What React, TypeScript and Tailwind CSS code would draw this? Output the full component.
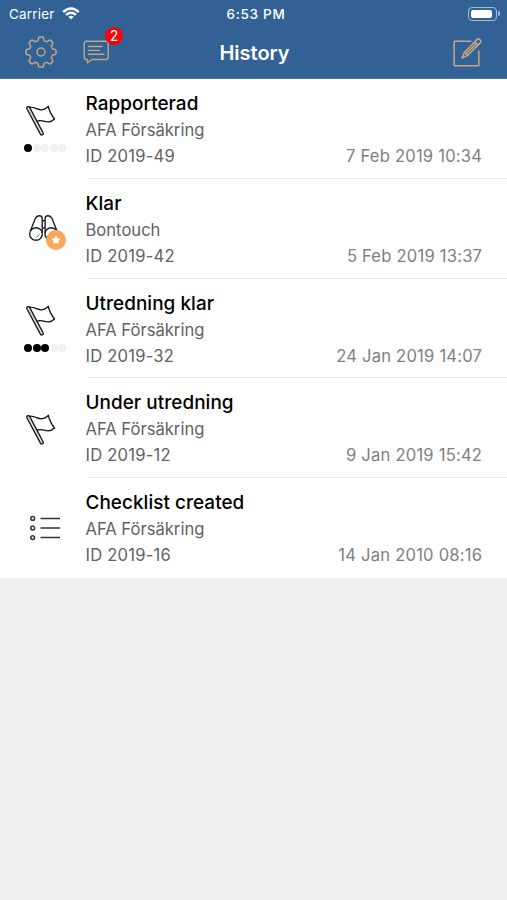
type IconName = 'flag' | 'binoculars' | 'list';

interface HistoryItem {
  id: string;
  title: string;
  company: string;
  date: string;
  icon: IconName;
  progress?: number;
}

const items: HistoryItem[] = [
  { id: '2019-49', title: 'Rapporterad', company: 'AFA Försäkring', date: '7 Feb 2019 10:34', icon: 'flag', progress: 1 },
  { id: '2019-42', title: 'Klar', company: 'Bontouch', date: '5 Feb 2019 13:37', icon: 'binoculars' },
  { id: '2019-32', title: 'Utredning klar', company: 'AFA Försäkring', date: '24 Jan 2019 14:07', icon: 'flag', progress: 3 },
  { id: '2019-12', title: 'Under utredning', company: 'AFA Försäkring', date: '9 Jan 2019 15:42', icon: 'flag' },
  { id: '2019-16', title: 'Checklist created', company: 'AFA Försäkring', date: '14 Jan 2010 08:16', icon: 'list' },
];

const teeth = [0, 45, 90, 135, 180, 225, 270, 315];

function GearIcon() {
  return (
    <svg width="32" height="32" viewBox="-16 -16 32 32" fill="none" stroke="#c5a582" strokeWidth="1.5">
      {teeth.map((angle) => (
        <path
          key={angle}
          transform={`rotate(${angle})`}
          d="M-4.6-11.1Q-3.4-10.6-2.9-12L-2.5-14Q-2.3-15-1.4-15H1.4Q2.3-15 2.5-14L2.9-12Q3.4-10.6 4.6-11.1"
        />
      ))}
      <circle r="4" />
    </svg>
  );
}

function ChatIcon() {
  return (
    <svg width="28" height="25" viewBox="0 0 28 25" fill="none" stroke="#c5a582" strokeWidth="1.4" strokeLinejoin="round">
      <path d="M3.5 1.2H22.9Q25.2 1.2 25.2 3.5V17.2Q25.2 19.5 22.9 19.5H9L4.5 22.8V19.5H3.5Q1.2 19.5 1.2 17.2V3.5Q1.2 1.2 3.5 1.2Z" />
      <path d="M5 6.5H19.5M5 10.4H17M5 14.3H21.5" />
    </svg>
  );
}

function ComposeIcon() {
  return (
    <svg width="32" height="32" viewBox="0 0 32 32" fill="none" stroke="#c5a582" strokeWidth="1.5" strokeLinejoin="round">
      <path d="M19.5 5.2H2.2V29.8H26.8V14.5" />
      <path d="M10 22L12.4 16.2L25.2 3.4Q26.4 2.3 27.6 3.4L28.4 4.2Q29.5 5.4 28.4 6.6L15.6 19.4Z" />
      <path d="M12.4 16.2L15.6 19.4M22.8 5.8L26 9M14 17.8L24.4 7.4" />
    </svg>
  );
}

function WifiIcon() {
  return (
    <svg width="18" height="13" viewBox="0 0 18 13" fill="none" stroke="#fff" strokeWidth="2.4">
      <path d="M1.2 5Q9-2 16.8 5M4.1 7.9Q9 3.7 13.9 7.9" />
      <path d="M6.4 9.8Q9 7.8 11.6 9.8L9 12.4Z" fill="#fff" stroke="none" />
    </svg>
  );
}

function FlagIcon() {
  return (
    <svg width="32" height="32" viewBox="0 0 32 32" fill="none" stroke="#111" strokeWidth="1.3" strokeLinejoin="round">
      <path d="M.9 3.7Q.4 2.2 1.7 1.7Q3 1.3 3.6 2.4L17.2 28Q17.6 29.3 16.4 29.8Q15.1 30.3 14.4 29.1Z" fill="#ddd" />
      <path d="M3.7 2.2C9.2 1.6 12 5.7 16.5 4.7C19.5 4.1 20.8 2.6 22.4 1.3C23.3 6.6 25.7 10.2 28.5 14C26 16.6 22.6 17.3 19.1 16.4C16 15.5 13.4 14.8 10.8 16.3" />
    </svg>
  );
}

function BinocularsIcon() {
  return (
    <div className="relative h-[36px] w-[38px]">
      <svg width="32" height="28" viewBox="0 0 32 28" fill="none" stroke="#222" strokeWidth="1.4">
        <circle cx="8" cy="20" r="6.3" />
        <circle cx="23.3" cy="20" r="6.3" />
        <path d="M2.3 17L7.2 4.7Q8.6 1.7 11.4 1.7Q14.2 1.7 14.2 4.7V19M29 17L24.1 4.7Q22.7 1.7 19.9 1.7Q17.1 1.7 17.1 4.7V19" />
        <path d="M14.2 6.7H17.1M14.2 14H17.1" />
        <path d="M8.2 23.6L11.6 20.4" strokeWidth="1" stroke="#777" />
      </svg>
      <span className="absolute right-0 bottom-0 flex size-5 items-center justify-center rounded-full bg-[#f7a85b]">
        <svg width="10" height="10" viewBox="0 0 10 10" fill="#fff">
          <path d="M5 .4L6.4 3.2L9.6 3.7L7.3 5.9L7.9 9L5 7.5L2.1 9L2.7 5.9L.4 3.7L3.6 3.2Z" />
        </svg>
      </span>
    </div>
  );
}

function ListIcon() {
  return (
    <svg width="32" height="26" viewBox="0 0 32 26" fill="none" stroke="#333" strokeWidth="1.5">
      <circle cx="3.7" cy="3.4" r="1.9" />
      <circle cx="3.7" cy="13" r="1.9" />
      <circle cx="3.7" cy="22.6" r="1.9" />
      <path d="M11.5 3.4H31M11.5 13H31M11.5 22.6H31" />
    </svg>
  );
}

function ProgressDots({ value }: { value: number }) {
  return (
    <div className="mt-[7px] flex gap-[0.6px]">
      {[1, 2, 3, 4, 5].map((step) => (
        <span key={step} className={`size-[8px] rounded-full ${step <= value ? 'bg-black' : 'bg-[#f0f0f0]'}`} />
      ))}
    </div>
  );
}

function RowIcon({ item }: { item: HistoryItem }) {
  if (item.icon === 'binoculars') {
    return (
      <div className="pt-[35px] pl-[28px]">
        <BinocularsIcon />
      </div>
    );
  }
  if (item.icon === 'list') {
    return (
      <div className="pt-[37px] pl-[29px]">
        <ListIcon />
      </div>
    );
  }
  return (
    <div className={`pl-[24px] ${item.progress ? 'pt-[26px]' : 'pt-[36px]'}`}>
      <div className="pl-[2px]">
        <FlagIcon />
      </div>
      {item.progress && <ProgressDots value={item.progress} />}
    </div>
  );
}

function HistoryRow({ item, last }: { item: HistoryItem; last: boolean }) {
  return (
    <li className="flex h-[99.75px]">
      <div className="w-[85.5px] shrink-0">
        <RowIcon item={item} />
      </div>
      <div className="flex flex-1 flex-col">
        <div className="flex-1 pt-[12px] pr-[25px] text-[16.6px] leading-[26px] text-[#626262]">
          <h2 className="text-[18.9px] leading-[26px] font-medium tracking-[0.06px] text-black">{item.title}</h2>
          <p>{item.company}</p>
          <div className="flex justify-between tracking-[0.2px]">
            <span>ID {item.id}</span>
            <time className="-mr-[0.2px] text-[#808080]">{item.date}</time>
          </div>
        </div>
        {!last && <div className="ml-[3px] h-px bg-[#e6e6e6]" />}
      </div>
    </li>
  );
}

export default function App() {
  return (
    <div className="min-h-screen bg-[#eeeeee] font-['Inter','Liberation_Sans',sans-serif]">
      <header className="h-[79px] border-b border-[#5079a5] bg-[#316195] text-white">
        <div className="grid h-[27px] grid-cols-3 items-center pr-[7px] pl-[9px] text-[13.5px]">
          <div className="flex items-center gap-[7px]">
            <span className="pt-px tracking-[0.2px]">Carrier</span>
            <WifiIcon />
          </div>
          <span className="pt-px pl-[3px] text-center font-medium tracking-[0.7px]">6:53 PM</span>
          <div className="flex items-center justify-end gap-px">
            <div className="h-[14px] w-[29px] rounded-[4px] border border-[#a5bbd3] p-[2px]">
              <div className="h-full w-[21px] rounded-[2px] bg-white" />
            </div>
            <div className="h-[5px] w-[2px] rounded-r-full bg-[#a5bbd3]" />
          </div>
        </div>
        <div className="grid h-[50px] grid-cols-3 items-center pr-[23px] pl-[25px]">
          <div className="flex items-center gap-[26px]">
            <GearIcon />
            <div className="relative">
              <ChatIcon />
              <span className="absolute -top-[13px] left-[22px] flex size-[18px] items-center justify-center rounded-full bg-[#fb0007] text-[14px]">
                2
              </span>
            </div>
          </div>
          <h1 className="pt-px text-center text-[20px] font-semibold">History</h1>
          <div className="flex justify-end">
            <ComposeIcon />
          </div>
        </div>
      </header>
      <ul className="bg-white">
        {items.map((item, index) => (
          <HistoryRow key={item.id} item={item} last={index === items.length - 1} />
        ))}
      </ul>
    </div>
  );
}
